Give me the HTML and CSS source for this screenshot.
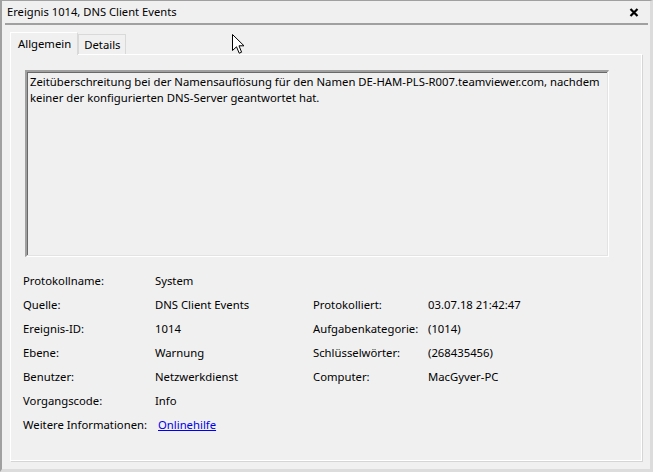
FILE: index.html
```html
<!DOCTYPE html>
<html lang="de">
<head>
  <meta charset="UTF-8">
  <title>Ereignis 1014, DNS Client Events</title>
  <link rel="stylesheet" href="styles.css">
</head>
<body>
  <div class="window">
    <div class="titlebar">
      <span class="title">Ereignis 1014, DNS Client Events</span>
      <svg class="close" width="10" height="9" viewBox="0 0 10 9">
        <path d="M1.5 1 L8.5 8 M8.5 1 L1.5 8" stroke="#000" stroke-width="2.2" fill="none"/>
      </svg>
    </div>
    <div class="sep"></div>

    <div class="tabs">
      <div class="tab tab-active">Allgemein</div>
      <div class="tab">Details</div>
    </div>

    <div class="panel">
      <div class="message">
        Zeitüberschreitung bei der Namensauflösung für den Namen DE-HAM-PLS-R007.teamviewer.com, nachdem<br>
        keiner der konfigurierten DNS-Server geantwortet hat.
      </div>

      <div class="fields">
        <div class="label">Protokollname:</div>
        <div class="value">System</div>
        <div></div>
        <div></div>

        <div class="label">Quelle:</div>
        <div class="value">DNS Client Events</div>
        <div class="label">Protokolliert:</div>
        <div class="value">03.07.18 21:42:47</div>

        <div class="label">Ereignis-ID:</div>
        <div class="value">1014</div>
        <div class="label">Aufgabenkategorie:</div>
        <div class="value">(1014)</div>

        <div class="label">Ebene:</div>
        <div class="value">Warnung</div>
        <div class="label">Schlüsselwörter:</div>
        <div class="value">(268435456)</div>

        <div class="label">Benutzer:</div>
        <div class="value">Netzwerkdienst</div>
        <div class="label">Computer:</div>
        <div class="value">MacGyver-PC</div>

        <div class="label">Vorgangscode:</div>
        <div class="value">Info</div>
        <div></div>
        <div></div>

        <div class="label">Weitere Informationen:</div>
        <div class="value"><a class="link" href="#">Onlinehilfe</a></div>
        <div></div>
        <div></div>
      </div>
    </div>

    <!-- mauszeiger -->
    <svg class="cursor" width="13" height="21" viewBox="0 0 13 21">
      <path d="M0.5 0.5 L0.5 16.5 L4.5 12.8 L7.2 19.2 L9.6 18.2 L7 11.8 L12 11.8 Z" fill="#fff" stroke="#000" stroke-width="1"/>
    </svg>
  </div>
</body>
</html>
```

FILE: styles.css
```css
* {
  margin: 0;
  padding: 0;
  box-sizing: border-box;
}
body {
  width: 653px;
  height: 472px;
  background: #f0f0f0;
  font-family: "Noto Sans", "Open Sans", sans-serif;
  font-size: 11.3px;
  color: #000;
  overflow: hidden;
}
.window {
  position: relative;
  width: 653px;
  height: 472px;
  border-top: 1px solid #a0a0a0;
  border-left: 2px solid #a0a0a0;
  border-right: 3px solid #dcdcdc;
  border-bottom: 3px solid #dcdcdc;
  background: #f0f0f0;
}
.titlebar {
  display: flex;
  justify-content: space-between;
  align-items: center;
  height: 22px;
  padding: 0 11px 0 5px;
}
.title {
  line-height: 22px;
  font-size: 11.2px;
}
.close {
  display: block;
}
.sep {
  height: 2px;
  margin: 0 2px 0 3px;
  background: #a0a0a0;
}
.tabs {
  display: flex;
  align-items: flex-end;
  height: 29px;
  padding-left: 8px;
}
.tab {
  height: 20px;
  padding: 0 5px;
  line-height: 19px;
  border: 1px solid #d9d9d9;
  border-bottom: none;
  background: #f0f0f0;
}
.tab-active {
  position: relative;
  height: 23px;
  padding: 0 6px 0 7px;
  line-height: 21px;
  border-color: #fff;
  border-right-color: #d9d9d9;
  margin-bottom: -1px;
  z-index: 1;
}
.panel {
  height: 407px;
  margin: 0 8px 0 8px;
  padding: 15px 32px 0 14px;
  border: 1px solid #fff;
  box-shadow: 1px 1px 0 #d5d5d5;
}
.message {
  height: 187px;
  padding: 2px 3px;
  line-height: 16px;
  white-space: nowrap;
  border-top: 2px solid #a0a0a0;
  border-left: 2px solid #a0a0a0;
  border-right: 1px solid #fff;
  border-bottom: 1px solid #fff;
  box-shadow: inset -1px -1px 0 #e3e3e3, inset 1px 1px 0 #696969;
}
.fields {
  display: grid;
  grid-template-columns: 132px 158px 115px auto;
  grid-auto-rows: 24px;
  margin: 12px 0 0 -2px;
  line-height: 24px;
}
.label,
.value {
  white-space: nowrap;
}
.link {
  margin-left: 3px;
  color: #0000ee;
  text-decoration: underline;
}
.cursor {
  position: absolute;
  left: 230px;
  top: 33px;
}
```
